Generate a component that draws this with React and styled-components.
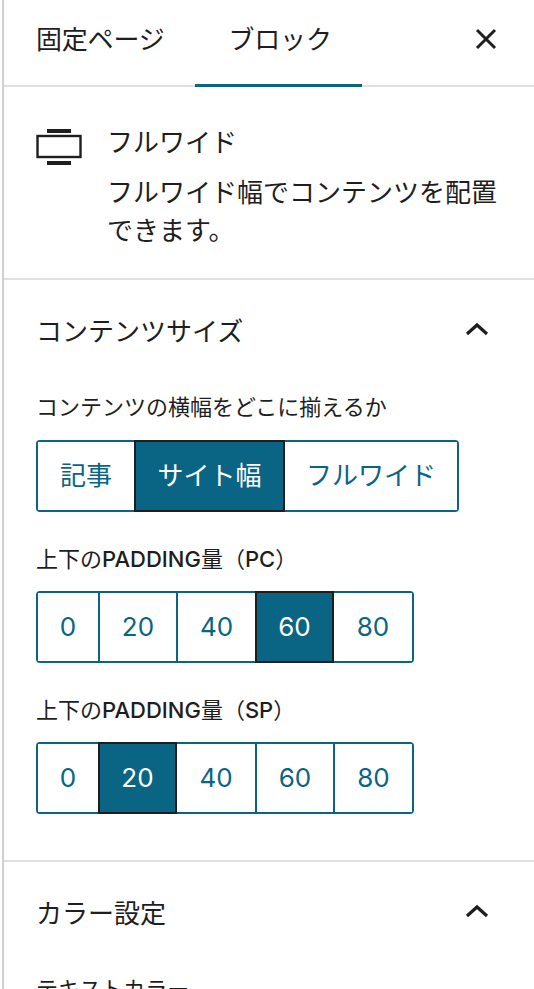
import React from "react";
import styled, { createGlobalStyle } from "styled-components";

const GlobalStyle = createGlobalStyle`
  html, body {
    margin: 0;
    padding: 0;
    background: #fff;
  }
  body {
    font-family: Inter, "Noto Sans CJK JP", sans-serif;
    color: #1e1e1e;
  }
`

const Sidebar = styled.div`
  width: 532px;
  height: 989px;
  margin-left: 2px;
  box-sizing: border-box;
  border-left: 2px solid #d0d0d0;
  overflow: hidden;
`
const TabBar = styled.div`
  height: 87px;
  box-sizing: border-box;
  border-bottom: 2px solid #e0e0e0;
  display: flex;
  align-items: flex-start;
`
const Tab = styled.div`
  height: 87px;
  box-sizing: border-box;
  padding: 23px ${(p) => (p.$active ? "30px" : "31px")} 0 ${(p) => (p.$active ? "33px" : "32px")};
  font-size: 26px;
  line-height: 34px;
  letter-spacing: -0.2px;
  border-bottom: 3px solid ${(p) => (p.$active ? "#0a6484" : "transparent")};
`
const CloseButton = styled.div`
  margin-left: auto;
  margin-right: 33px;
  margin-top: 24px;
  width: 30px;
  height: 30px;
`
const BlockCard = styled.div`
  display: flex;
  gap: 25px;
  padding: 37px 33px 28px 32px;
  border-bottom: 2px solid #e0e0e0;
`
const BlockIcon = styled.div`
  width: 46px;
  height: 40px;
  flex-shrink: 0;
  margin-top: 3px;
`
const BlockTitle = styled.div`
  font-size: 26px;
  line-height: 38px;
  margin-bottom: 12px;
`
const BlockText = styled.div`
  font-size: 26px;
  line-height: 38px;
  width: 392px;
`
const Panel = styled.div`
  padding: 0 33px 46px 32px;
  border-bottom: 2px solid #e0e0e0;
`
const PanelHead = styled.div`
  display: flex;
  align-items: center;
  justify-content: space-between;
  height: 36px;
  padding-top: 31px;
  margin-bottom: 45px;
  font-size: 26px;
`
const Chevron = styled.svg`
  width: 24px;
  height: 16px;
  margin-right: 12px;
`
const Label = styled.div`
  font-size: 22px;
  line-height: 30px;
  margin-bottom: ${(p) => p.$mb || 17}px;
`
const Latin = styled.span`
  font-weight: 500;
`
const Segments = styled.div`
  display: inline-flex;
  height: 72px;
  box-sizing: border-box;
  border: 2px solid #0a6484;
  border-radius: 4px;
  margin-bottom: ${(p) => p.$gap || 0}px;
  vertical-align: top;
`
const Segment = styled.div`
  width: ${(p) => p.$w}px;
  margin: ${(p) => (p.$on ? "-2px 0" : "0")};
  box-sizing: border-box;
  display: flex;
  align-items: center;
  justify-content: center;
  font-size: 26px;
  line-height: 34px;
  color: ${(p) => (p.$on ? "#fff" : "#0a6484")};
  background: ${(p) => (p.$on ? "#0a6484" : "#fff")};
  border: ${(p) => (p.$on ? "2px solid #1e1e1e" : "none")};
  border-left: ${(p) => (p.$line ? "2px solid #0a6484" : p.$on ? "2px solid #1e1e1e" : "none")};
`
const Row = styled.div`
  line-height: 0;
`

const paddings = ["0", "20", "40", "60", "80"]

const PaddingGroup = ({ active, gap, widths }) => (
  <Row>
    <Segments $gap={gap}>
      {paddings.map((v, i) => (
        <Segment
          key={v}
          $w={widths[i]}
          $on={v === active}
          $line={i > 0 && v !== active && paddings[i - 1] !== active}
        >
          {v}
        </Segment>
      ))}
    </Segments>
  </Row>
)

const ChevronUp = () => (
  <Chevron viewBox="0 0 24 16">
    <path d="M2 13 L12 4 L22 13" fill="none" stroke="#1e1e1e" strokeWidth="3.2" />
  </Chevron>
)

export default function App() {
  return (
    <>
      <GlobalStyle />
      <Sidebar>
        <TabBar>
          <Tab>固定ページ</Tab>
          <Tab $active>ブロック</Tab>
          <CloseButton>
            <svg width="30" height="30" viewBox="0 0 30 30">
              <path d="M6 6 L24 24 M24 6 L6 24" stroke="#1e1e1e" strokeWidth="3" fill="none" />
            </svg>
          </CloseButton>
        </TabBar>
        <BlockCard>
          <BlockIcon>
            <svg width="46" height="40" viewBox="0 0 46 40" fill="none">
              <rect x="11" y="2" width="24" height="4" fill="#1e1e1e" />
              <rect x="1.5" y="9" width="43" height="21" stroke="#1e1e1e" strokeWidth="2.4" />
              <rect x="11" y="34" width="24" height="4" fill="#1e1e1e" />
            </svg>
          </BlockIcon>
          <div>
            <BlockTitle>フルワイド</BlockTitle>
            <BlockText>フルワイド幅でコンテンツを配置できます。</BlockText>
          </div>
        </BlockCard>
        <Panel>
          <PanelHead>
            コンテンツサイズ
            <ChevronUp />
          </PanelHead>
          <Label $mb={18}>コンテンツの横幅をどこに揃えるか</Label>
          <Row>
            <Segments $gap={32}>
              <Segment $w={96}>記事</Segment>
              <Segment $w={151} $on>サイト幅</Segment>
              <Segment $w={172}>フルワイド</Segment>
            </Segments>
          </Row>
          <Label>上下の<Latin>PADDING</Latin>量（<Latin>PC</Latin>）</Label>
          <PaddingGroup active="60" gap={32} widths={[60, 78, 79, 79, 78]} />
          <Label>上下の<Latin>PADDING</Latin>量（<Latin>SP</Latin>）</Label>
          <PaddingGroup active="20" widths={[60, 79, 78, 78, 79]} />
        </Panel>
        <Panel>
          <PanelHead>
            カラー設定
            <ChevronUp />
          </PanelHead>
          <Label>テキストカラー</Label>
        </Panel>
      </Sidebar>
    </>
  )
}
